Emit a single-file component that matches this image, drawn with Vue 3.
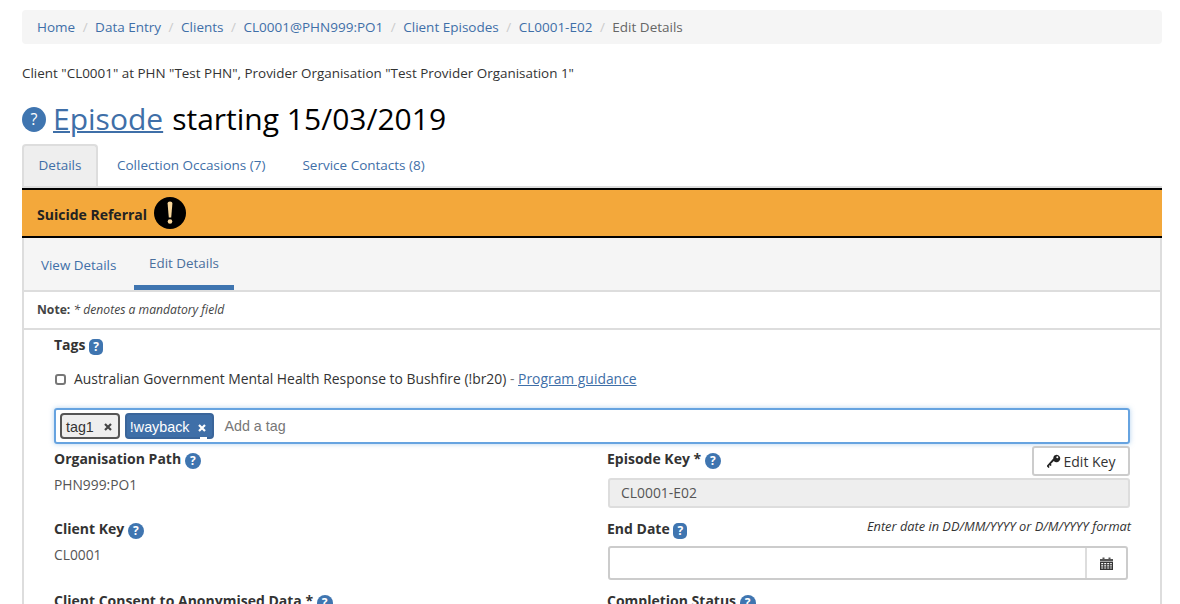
<script setup>
const crumbs = ['Home', 'Data Entry', 'Clients', 'CL0001@PHN999:PO1', 'Client Episodes', 'CL0001-E02']
</script>

<template>
  <div class="page">
    <nav class="crumbs">
      <template v-for="c in crumbs" :key="c">
        <a class="crumb">{{ c }}</a><span class="sep">/</span>
      </template>
      <span class="current">Edit Details</span>
    </nav>
    <p class="client">Client "CL0001" at PHN "Test PHN", Provider Organisation "Test Provider Organisation 1"</p>
    <h1 class="title">
      <span class="help big">?</span>
      <a class="ep">Episode</a><span class="rest">starting 15/03/2019</span>
    </h1>
    <div class="tabs">
      <a class="tab active">Details</a>
      <a class="tab">Collection Occasions (7)</a>
      <a class="tab">Service Contacts (8)</a>
    </div>
    <div class="alert">
      <b class="alert-text">Suicide Referral</b>
      <svg class="warn" viewBox="0 0 32 32" width="32" height="32">
        <circle cx="16" cy="16" r="16" fill="#000" />
        <path d="M13.6 6.5c0-1.3 1-2 2.4-2s2.400.7 2.400 2L17.200 20.500h-2.400z" fill="#f9d79b" />
        <circle cx="16" cy="24.500" r="2.300" fill="#f9d79b" />
      </svg>
    </div>
    <div class="panel">
      <div class="subtabs">
        <a class="sub">View Details</a>
        <a class="sub on">Edit Details</a>
      </div>
      <div class="note"><b>Note:</b> <i>* denotes a mandatory field</i></div>
      <div class="form">
        <div class="label tags-label">Tags <span class="help sq">?</span></div>
        <label class="check">
          <span class="box"></span>
          <span>Australian Government Mental Health Response to Bushfire (!br20) <span class="dash">-</span> <a class="guide">Program guidance</a></span>
        </label>
        <div class="taginput">
          <span class="tag">tag1<svg class="x" viewBox="0 0 8 8" width="8" height="8"><path d="M1 1l6 6M7 1L1 7" stroke="#444" stroke-width="2.2" /></svg></span>
          <span class="tag blue">!wayback<svg class="x" viewBox="0 0 8 8" width="8" height="8"><path d="M1 1l6 6M7 1L1 7" stroke="#fff" stroke-width="2.2" /></svg></span>
          <span class="ph">Add a tag</span>
        </div>
        <div class="cols">
          <div class="col left">
            <div class="label">Organisation Path <span class="help">?</span></div>
            <div class="val first">PHN999:PO1</div>
            <div class="label second">Client Key <span class="help">?</span></div>
            <div class="val val2">CL0001</div>
            <div class="label third">Client Consent to Anonymised Data * <span class="help">?</span></div>
          </div>
          <div class="col right">
            <div class="rowhead">
              <div class="label">Episode Key * <span class="help">?</span></div>
              <button class="keybtn">
                <svg viewBox="0 0 14 14" width="14" height="14"><path fill-rule="evenodd" d="M9.500.8a3.700 3.700 0 1 1-2.700 6.200L3.800 10l.9.9-1.200 1.200-.9-.9-.9.9 .9.9-1 1-2-2L6.300 4.600A3.700 3.700 0 0 1 9.500.8zm.8 1.500a1 1 0 1 0 0 2 1 1 0 0 0 0-2z" fill="#222" /></svg>
                Edit Key
              </button>
            </div>
            <div class="readonly">CL0001-E02</div>
            <div class="rowhead date">
              <div class="label">End Date <span class="help sq">?</span></div>
              <i class="hint">Enter date in DD/MM/YYYY or D/M/YYYY format</i>
            </div>
            <div class="dateinput">
              <span class="dfield"></span>
              <span class="cal">
                <svg viewBox="0 0 13 13" width="13" height="13"><path d="M0 2h2.500V.5h2V2h4V.5h2V2H13v2.500H0z" fill="#555" /><path fill-rule="evenodd" d="M0 5h13v8H0zM1.200 6v1.200h2V6zm3 0v1.200h2V6zm3 0v1.200h2V6zm3 0v1.200h1.600V6zM1.200 8.200v1.200h2V8.200zm3 0v1.200h2V8.200zm3 0v1.200h2V8.200zm3 0v1.200h1.600V8.200zM1.200 10.400v1.200h2v-1.200zm3 0v1.200h2v-1.200zm3 0v1.200h2v-1.200zm3 0v1.200h1.600v-1.200z" fill="#333" /></svg>
              </span>
            </div>
            <div class="label third-r">Completion Status <span class="help">?</span></div>
          </div>
        </div>
      </div>
    </div>
  </div>
</template>

<style>
html, body { margin: 0; background: #fff; overflow: hidden; }
</style>

<style scoped>
.page { box-sizing: border-box; width: 1180px; height: 604px; overflow: hidden; padding: 10px 18px 0 22px; font-family: "Open Sans", sans-serif; font-size: 14px; color: #333; }
a { color: #3f6fa8; }
.crumbs { height: 34px; background: #f5f5f5; border-radius: 4px; padding: 0 0 0 15px; box-sizing: border-box; display: flex; align-items: center; font-size: 13.5px; white-space: nowrap; }
.sep { color: #ccc; padding: 0 7.5px; }
.current { color: #666; }
.client { margin: 20px 0 0; font-size: 13.45px; line-height: 18px; color: #333; white-space: nowrap; }
.title { margin: 16px 0 0; height: 42px; font-size: 30px; line-height: 42px; font-weight: 400; color: #000; display: flex; align-items: center; white-space: pre; }
.ep { text-decoration: underline; text-decoration-thickness: 2px; margin-right: 9px; }
.help { display: inline-flex; align-items: center; justify-content: center; width: 16px; height: 16px; border-radius: 50%; background: #3f75b0; color: #fff; font-size: 12px; font-weight: 700; vertical-align: -1px; line-height: 1; }
.help.sq { border-radius: 5px; width: 14px; height: 16px; }
.help.big { width: 24px; height: 25px; font-size: 16px; font-weight: 400; margin-right: 7px; }
.tabs { display: flex; height: 42px; margin-top: 4px; border-bottom: 2px solid #ddd; box-sizing: content-box; font-size: 13.5px; }
.tab { padding: 0 18.5px; line-height: 42px; height: 42px; }
.tab.active { box-sizing: border-box; width: 76px; padding: 0; text-align: center; background: #eee; border: 2px solid #ddd; border-bottom: 0; border-radius: 4px 4px 0 0; line-height: 38px; }
.tab.active + .tab { padding-left: 19px; }
.alert { box-sizing: border-box; height: 50px; background: #f3a83b; border-top: 2px solid #000; border-bottom: 2px solid #000; display: flex; align-items: center; gap: 7px; padding-left: 15px; font-size: 14px; color: #222; }
.alert-text { padding-top: 2px; }
.panel { border-left: 2px solid #ddd; border-right: 2px solid #ddd; height: 400px; }
.subtabs { box-sizing: border-box; height: 54px; background: #f5f5f5; border-bottom: 2px solid #ddd; display: flex; padding-left: 17px; font-size: 13.4px; }
.sub { width: 77px; line-height: 54px; margin-right: 16px; white-space: nowrap; }
.sub.on { width: 100px; text-align: center; line-height: 50px; height: 52px; box-sizing: border-box; border-bottom: 5px solid #3f75b0; color: #4a6f9c; }
.note { box-sizing: border-box; height: 38px; border-bottom: 2px solid #ddd; padding-left: 13px; line-height: 36px; font-size: 12.15px; color: #444; }
.form { padding: 0 30px; }
.label { font-weight: 700; font-size: 14px; line-height: 18px; color: #333; white-space: nowrap; }
.tags-label { margin-top: 6px; }
.check { display: flex; align-items: center; gap: 9px; margin-top: 15px; font-size: 13.9px; line-height: 18px; }
.box { box-sizing: border-box; width: 11px; height: 11px; margin-left: 1px; margin-right: -1px; border: 2px solid #777; border-radius: 3px; }
.dash { color: #777; }
.guide { text-decoration: underline; }
.taginput { box-sizing: border-box; height: 36px; margin-top: 20px; border: 2px solid #66a3e0; border-radius: 3px; box-shadow: 0 0 5px rgba(102,163,224,.5); display: flex; align-items: center; gap: 5px; padding: 2px 0 0 4px; font-family: "Liberation Sans", sans-serif; font-size: 14.3px; }
.tag { position: relative; box-sizing: border-box; height: 26px; margin-top: -2px; padding: 2px 6px 0 4px; border: 2px solid #555; border-radius: 4px; background: #eee; display: flex; align-items: center; color: #333; }
.tag.blue { background: #3f6fa8; border-color: #3a659a; color: #fff; padding: 2px 6px 0 3px; }
.tag.blue::after { content: ""; position: absolute; right: 5px; bottom: -2px; width: 7px; height: 2px; background: #fff; }
.x { margin-left: 10px; margin-top: 0; }
.tag.blue .x { margin-left: 9px; margin-top: 2px; }
.ph { color: #777; margin: -2px 0 0 5px; }
.cols { display: flex; margin-top: 6px; }
.col.left { width: 553px; }
.col.right { width: 523px; }
.val { margin-top: 6px; font-size: 13.8px; line-height: 18px; color: #555; }
.val.first { margin-top: 7px; }
.val2 { margin-top: 7px; }
.second { margin-top: 26px; }
.third { margin-top: 28px; }
.rowhead { display: flex; justify-content: space-between; align-items: flex-start; }
.keybtn { box-sizing: border-box; height: 30px; width: 98px; background: #fff; border: 2px solid #ccc; border-radius: 3px; margin-top: -4px; font: 14px "Open Sans", sans-serif; color: #333; display: flex; align-items: center; justify-content: center; gap: 3px; padding: 0; }
.readonly { box-sizing: border-box; height: 30px; background: #eee; border: 2px solid #ddd; border-radius: 3px; line-height: 26px; padding-left: 11px; font-size: 13.9px; color: #555; margin-top: 2px; margin-left: 1px; }
.date { margin-top: 12px; }
.hint { font-size: 12.8px; color: #333; line-height: 18px; margin: -3px -1px 0 0; white-space: nowrap; }
.dateinput { box-sizing: border-box; height: 34px; width: 520px; margin: 7px 0 0 1px; border: 2px solid #ccc; border-radius: 3px; display: flex; }
.dfield { flex: 1; }
.cal { width: 39px; border-left: 2px solid #ddd; display: flex; align-items: center; justify-content: center; }
.third-r { margin-top: 12px; }
</style>
